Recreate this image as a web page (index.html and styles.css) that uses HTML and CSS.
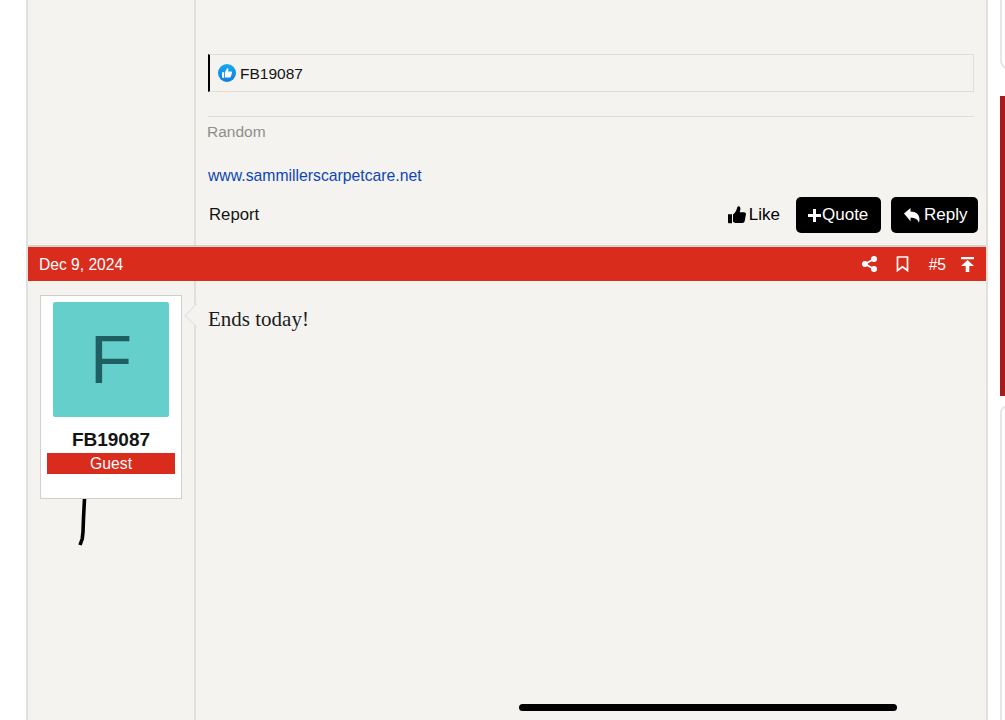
FILE: index.html
```html
<!DOCTYPE html>
<html lang="en">
<head>
<meta charset="utf-8">
<title>Thread</title>
<link rel="stylesheet" href="styles.css">
</head>
<body>
<div class="page">
  <main class="thread">
    <article class="post post-top">
      <aside class="user-col"></aside>
      <div class="content-col">
        <div class="reactions">
          <svg class="like-badge" viewBox="0 0 18 18" width="18" height="18" aria-hidden="true">
            <defs><linearGradient id="lg" x1="0" y1="0" x2="0" y2="1"><stop offset="0" stop-color="#14a8ef"/><stop offset="1" stop-color="#0f7fe0"/></linearGradient></defs>
            <circle cx="9" cy="9" r="9" fill="url(#lg)"/>
            <path fill="#fff" d="M4 8.2h2.2v5.600H4zM7 8.200l2-3.900c.9-.3 1.500.3 1.400 1.200l-.3 1.900h3c.7 0 1.100.6.900 1.200l-1.100 4c-.1.500-.5.800-1 .8H7z"/>
          </svg>
          <span class="reaction-name">FB19087</span>
        </div>
        <div class="signature">
          <p class="sig-random">Random</p>
          <a class="sig-link" href="#">www.sammillerscarpetcare.net</a>
        </div>
        <footer class="actions">
          <a class="report" href="#">Report</a>
          <div class="action-group">
            <a class="like" href="#">
              <svg viewBox="0 0 18 18" width="18" height="18" aria-hidden="true"><path fill="#000" d="M0 8.200h4v9H1a1 1 0 0 1-1-1zM5 8.400c2-1.600 3.400-3.600 4-6.200.2-1.200.8-2 1.700-1.900 1.500.2 2 1.700 1.600 3.500l-.6 2.500h4.400c1.200 0 2 1 1.800 2.100l-1.200 6.700c-.2 1.200-1.100 2-2.300 2H8.600c-1.400 0-2.500-.5-3.600-1z"/></svg>
              <span>Like</span>
            </a>
            <a class="btn btn-quote" href="#">
              <svg viewBox="0 0 15 15" width="15" height="15" aria-hidden="true"><path fill="#fff" d="M6 1h3v5h5v3H9v5H6V9H1V6h5z"/></svg>
              <span>Quote</span>
            </a>
            <a class="btn btn-reply" href="#">
              <svg viewBox="0 0 16 15" width="16" height="15" aria-hidden="true"><path fill="#fff" d="M0 5.600 6.500 0v3.400c5.500 0 9 2.800 9 8 0 1.200-.3 2.400-.7 3.400-.8-3.600-3.600-5.100-8.300-5.100v3.500z"/></svg>
              <span>Reply</span>
            </a>
          </div>
        </footer>
      </div>
    </article>

    <header class="post-bar">
      <time class="post-date">Dec 9, 2024</time>
      <div class="post-tools">
        <svg class="tool-share" viewBox="0 0 15 16" width="15" height="16" aria-hidden="true"><circle cx="12" cy="3" r="3" fill="#fff"/><circle cx="3" cy="8" r="3" fill="#fff"/><circle cx="12" cy="13" r="3" fill="#fff"/><path fill="none" stroke="#fff" stroke-width="1.800" d="M12 3 3 8l9 5"/></svg>
        <svg class="tool-mark" viewBox="0 0 13 16" width="13" height="16" aria-hidden="true"><path fill="none" stroke="#fff" stroke-width="1.700" d="M1.500 1h10v13.500l-5-3.800-5 3.800z"/></svg>
        <span class="tool-num">#5</span>
        <svg class="tool-top" viewBox="0 0 13 15" width="13" height="15" aria-hidden="true"><path fill="#fff" d="M0 0h13v2.200H0zM6.500 3 13 9H8.300v6H4.700V9H0z"/></svg>
      </div>
    </header>

    <article class="post post-bottom">
      <aside class="user-col">
        <div class="user-card">
          <div class="avatar">F</div>
          <div class="user-name">FB19087</div>
          <div class="user-title">Guest</div>
          <span class="card-arrow"></span>
        </div>
      </aside>
      <div class="content-col">
        <p class="message">Ends today!</p>
      </div>
    </article>
  </main>

  <aside class="sidebar">
    <div class="side-card side-card-top"></div>
    <div class="side-red"></div>
    <div class="side-card side-card-bottom"></div>
  </aside>
</div>

<svg class="scribble" viewBox="0 0 12 50" width="12" height="50" aria-hidden="true"><path fill="none" stroke="#000" stroke-width="3.600" stroke-linejoin="round" d="M7.500 1 6.500 20 6 34 5.200 41 3 47"/></svg>
<div class="home-indicator"></div>
</body>
</html>
```
FILE: styles.css
```css
* { box-sizing: border-box; }
html, body { margin: 0; height: 720px; overflow: hidden; background: #fff; }
body { font-family: "Liberation Sans", Arial, sans-serif; color: #141414; }
a { color: inherit; text-decoration: none; }
p { margin: 0; }

.page { display: flex; height: 720px; padding-left: 26px; }

.thread {
  width: 962px;
  height: 720px;
  border-left: 2px solid #e0e0dd;
  border-right: 2px solid #e0e0dd;
  display: flex;
  flex-direction: column;
  background: #f4f3f0;
}

.post { display: flex; }
.post-top { height: 245px; }
.post-bottom { flex: 1; }

.user-col { width: 168px; flex: none; border-right: 2px solid #e0e0dd; padding: 14px 0 0 12px; }
.content-col { flex: 1; padding: 0 12px 0 12px; min-width: 0; }

.reactions {
  margin-top: 54px;
  height: 38px;
  border: 1px solid #dededb;
  border-left: 2px solid #000;
  display: flex;
  align-items: center;
  gap: 4px;
  padding-left: 8px;
  font-size: 15.500px;
}
.like-badge { flex: none; }
.reaction-name { padding-top: 1px; }

.signature { margin-top: 24px; border-top: 1px solid #dededb; padding-top: 6px; }
.sig-random { font-size: 15.500px; line-height: 17px; color: #8e8e8c; margin-left: -1px; }
.sig-link { display: block; margin-top: 27px; font-size: 15.750px; line-height: 17px; color: #0f46b4; }

.actions { margin-top: 13px; display: flex; align-items: center; justify-content: space-between; margin-right: -4px; }
.report { font-size: 16.750px; padding-left: 1px; }
.action-group { display: flex; align-items: center; }
.like { display: flex; align-items: center; gap: 3px; font-size: 17px; margin-right: 16px; color: #000; }
.btn {
  height: 36px;
  background: #000;
  color: #fff;
  border-radius: 5px;
  display: flex;
  align-items: center;
  font-size: 17px;
}
.btn-quote { width: 85px; padding-left: 11px; margin-right: 10px; }
.btn-reply { width: 87px; padding-left: 13px; gap: 4px; }

.post-bar {
  height: 36px;
  border-top: 2px solid #d3d3d0;
  background: #d92c1d;
  color: #fff;
  display: flex;
  align-items: center;
  justify-content: space-between;
  padding: 0 12px 0 11px;
  font-size: 15.600px;
}
.post-date { padding-top: 2px; }
.post-tools { display: flex; align-items: center; }
.tool-mark { margin-left: 19px; }
.tool-num { margin-left: 20px; font-size: 15.600px; padding-top: 2px; }
.tool-top { margin-left: 15px; }

.user-card {
  position: relative;
  width: 142px;
  height: 204px;
  background: #fff;
  border: 1px solid #cfcfcc;
  padding: 6px 6px 0;
}
.avatar {
  width: 116px;
  height: 115px;
  margin: 0 auto;
  background: #65cfcb;
  border-radius: 2px;
  color: #1f5f61;
  font-size: 69px;
  line-height: 115px;
  text-align: center;
}
.user-name { margin-top: 11px; text-align: center; font-size: 19px; font-weight: 700; line-height: 23px; color: #141414; }
.user-title { margin-top: 2px; height: 21px; background: #d92c1d; color: #fff; text-align: center; font-size: 15.750px; line-height: 22px; }
.card-arrow {
  position: absolute;
  left: 147px;
  top: 11px;
  width: 17px;
  height: 17px;
  background: #f4f3f0;
  border-left: 1px solid #e0e0dd;
  border-bottom: 1px solid #e0e0dd;
  transform: rotate(45deg);
}

.post-bottom .content-col { padding-top: 25px; }
.message { font-family: "Liberation Serif", "Times New Roman", serif; font-size: 21px; line-height: 26px; color: #1c1c1c; }

.sidebar { flex: 1; padding-left: 12px; display: flex; flex-direction: column; overflow: hidden; }
.side-card { width: 30px; flex: none; border: 2px solid #e6e6e4; border-right: 0; background: #fff; }
.side-card-top { height: 69px; border-top: 0; border-radius: 0 0 0 8px; }
.side-red { height: 300px; margin-top: 27px; width: 30px; flex: none; background: #a81a1c; }
.side-card-bottom { margin-top: 9px; height: 330px; border-radius: 8px 0 0 0; border-bottom: 0; }

.scribble { position: absolute; left: 77px; top: 498px; }
.home-indicator { position: absolute; left: 519px; top: 704px; width: 378px; height: 7px; border-radius: 4px; background: #000; }
```
